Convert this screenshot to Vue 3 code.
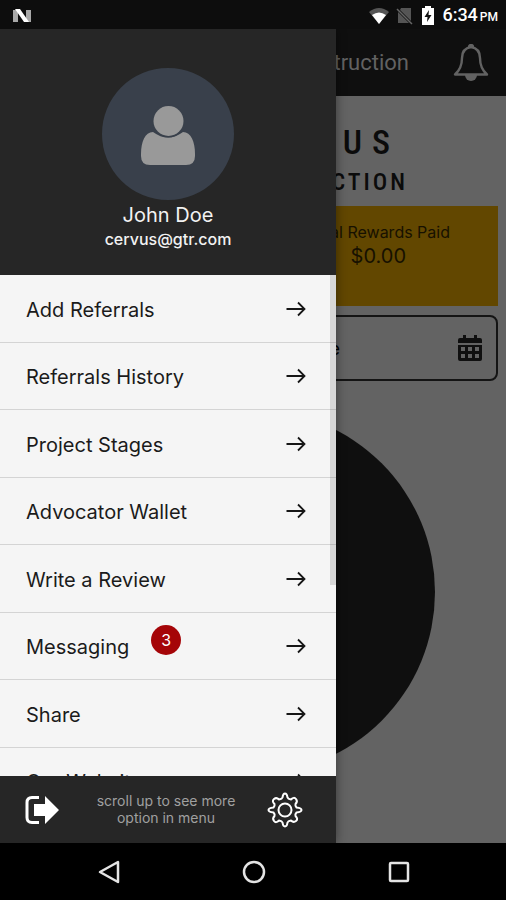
<script setup>
const items = [
  { label: 'Add Referrals' },
  { label: 'Referrals History' },
  { label: 'Project Stages' },
  { label: 'Advocator Wallet' },
  { label: 'Write a Review' },
  { label: 'Messaging', count: 3 },
  { label: 'Share' },
  { label: 'Our Website' },
]
</script>

<template>
  <div class="phone">
    <div class="status">
      <svg class="brand" width="20" height="16" viewBox="0 0 20 16">
        <path d="M1 2h5v12H1zM14 2h5v12h-5z" fill="#a8a8a8" />
        <path d="M3 1h5l9 13h-5z" fill="#fff" />
      </svg>
      <div class="status-right">
        <svg width="20" height="16" viewBox="0 0 20 16">
          <path d="M0 4Q10-4 20 4L10 16z" fill="#555" />
          <path d="M3 7Q10 2 17 7L10 16z" fill="#fff" />
        </svg>
        <svg width="18" height="18" viewBox="0 0 18 18">
          <path d="M5 1h10v13L4 3z" fill="#555" />
          <path d="M2 5v11h11z" fill="#555" />
          <path d="M1 2l15 15" stroke="#666" stroke-width="1.5" />
        </svg>
        <svg width="14" height="20" viewBox="0 0 14 20">
          <path d="M4 0h6v2h3v17H1V2h3z" fill="#fff" />
          <path d="M8 4L3.500 11H6.500L6 16 10.500 9H7.500z" fill="#111" />
        </svg>
        <span class="clock">6:34<small>PM</small></span>
      </div>
    </div>

    <div class="stage">
      <main class="home">
        <header class="appbar">
          <h1>Cervus Construction</h1>
          <button class="icon-btn" aria-label="Notifications">
            <svg width="36" height="38" viewBox="0 0 36 38" fill="none" stroke="#626262" stroke-width="2.400">
              <path d="M18 3c-6 1-9 5-9 11 0 9-3 13-7 16.500h32C30 27 27 23 27 14c0-6-3-10-9-11z" stroke-linejoin="round" />
              <path d="M16 3a2 2 0 0 1 4 0" />
              <path d="M12 31h12a6 6 0 0 1-12 0z" fill="#626262" stroke="none" />
            </svg>
          </button>
        </header>
        <div class="logo">
          <div class="logo-top">CERVUS</div>
          <div class="logo-sub">CONSTRUCTION</div>
        </div>
        <section class="reward">
          <div class="reward-label">Total Rewards Paid</div>
          <div class="reward-value">$0.00</div>
        </section>
        <button class="date">
          <span>Select Date Range</span>
          <svg width="24" height="26" viewBox="0 0 24 26">
            <path d="M5 0h3v3h8V0h3v3h3q2 0 2 2v3H0V5q0-2 2-2h3z" fill="#101010" />
            <path fill-rule="evenodd" d="M0 10h24v14q0 2-2 2H2q-2 0-2-2zM3 12v4h4v-4zM10 12v4h4v-4zM17 12v4h4v-4zM3 19v4h4v-4zM10 19v4h4v-4zM17 19v4h4v-4z" fill="#101010" />
          </svg>
        </button>
        <div class="chart"></div>
      </main>

      <aside class="drawer">
        <div class="profile">
          <svg class="avatar" width="132" height="132" viewBox="0 0 132 132">
            <circle cx="66" cy="66" r="66" fill="#39404b" />
            <path d="M51 64C43 64 39 74 39 86v2q0 9 9 9h36q9 0 9-9v-2C93 74 89 64 81 64Q66 75 51 64z" fill="#999" />
            <circle cx="66.500" cy="53" r="16.500" fill="#39404b" />
            <circle cx="66.500" cy="53" r="15" fill="#999" />
          </svg>
          <div class="name">John Doe</div>
          <div class="mail">cervus@gtr.com</div>
        </div>
        <nav class="menu">
          <div class="list">
            <a v-for="item in items" :key="item.label" href="#" class="row">
              <span class="label">{{ item.label }}</span>
              <span v-if="item.count" class="badge">{{ item.count }}</span>
              <svg class="arrow" width="20" height="16" viewBox="0 0 20 16" fill="none" stroke="#161616" stroke-width="1.800">
                <path d="M0.500 8H18M12 1.500L18.500 8 12 14.500" />
              </svg>
            </a>
          </div>
          <div class="thumb"></div>
        </nav>
        <footer class="foot">
          <button class="icon-btn" aria-label="Log out">
            <svg width="36" height="30" viewBox="0 0 36 30">
              <path d="M15 2.500H8q-5 0-5 5v15q0 5 5 5h7" fill="none" stroke="#fff" stroke-width="3" />
              <path d="M10 9h11V1l14 14-14 14v-8H10z" fill="#fff" />
            </svg>
          </button>
          <p>scroll up to see more option in menu</p>
          <button class="icon-btn" aria-label="Settings">
            <svg width="36" height="36" viewBox="0 0 36 36" fill="none" stroke="#fff" stroke-width="2" stroke-linejoin="round">
              <path d="M15.500 5.500Q16 1.500 18 1.500T20.500 5.500Q21 7 24 7.500Q27 4.500 29 7T28.500 12Q28 14 29.500 15.500Q34.500 16 34.500 18T29.500 20.500Q28 22 28.500 24Q31.500 27 29 29T24 28.500Q21 29 20.500 30.500Q20 34.500 18 34.500T15.500 30.500Q15 29 12 28.500Q9 31.500 7 29T7.500 24Q8 22 6.500 20.500Q1.500 20 1.500 18T6.500 15.500Q8 14 7.500 12Q4.500 9 7 7T12 7.500Q15 7 15.500 5.500z" />
              <circle cx="18" cy="18" r="6.500" />
            </svg>
          </button>
        </footer>
      </aside>
    </div>

    <div class="sysnav">
      <button class="icon-btn" aria-label="Back">
        <svg width="24" height="24" viewBox="0 0 24 24" fill="none" stroke="#e4e4e4" stroke-width="2.500" stroke-linejoin="round"><path d="M21 2v20L3 12z" /></svg>
      </button>
      <button class="icon-btn" aria-label="Home">
        <svg width="24" height="24" viewBox="0 0 24 24" fill="none" stroke="#e4e4e4" stroke-width="2.500"><circle cx="12" cy="12" r="10" /></svg>
      </button>
      <button class="icon-btn" aria-label="Recent apps">
        <svg width="24" height="24" viewBox="0 0 24 24" fill="none" stroke="#e4e4e4" stroke-width="2.500"><rect x="3" y="3" width="18" height="18" rx="1" /></svg>
      </button>
    </div>
  </div>
</template>

<style>
body {
  margin: 0;
  background: #000;
}
</style>

<style scoped>
* {
  box-sizing: border-box;
}
.phone {
  display: flex;
  flex-direction: column;
  height: 100vh;
  font-family: Inter, Roboto, sans-serif;
}
button {
  font: inherit;
  color: inherit;
  cursor: pointer;
}
.icon-btn {
  display: flex;
  padding: 0;
  border: 0;
  background: none;
}
.status {
  display: flex;
  align-items: center;
  justify-content: space-between;
  height: 29px;
  padding: 2px 8px 0 12px;
  background: #0d0d0d;
}
.status-right {
  display: flex;
  align-items: center;
  gap: 7px;
}
.clock {
  display: flex;
  align-items: baseline;
  gap: 2px;
  color: #fff;
  font: 500 18px/20px Roboto, sans-serif;
}
.clock small {
  font-size: 12px;
}
.stage {
  position: relative;
  flex: 1;
  min-height: 0;
  overflow: hidden;
}
.home {
  display: flex;
  flex-direction: column;
  height: 100%;
  background: #636363;
}
.appbar {
  display: flex;
  align-items: center;
  justify-content: flex-end;
  gap: 44px;
  flex: none;
  height: 67px;
  padding: 0 17px;
  background: #0f0f0f;
}
.appbar h1 {
  margin: 0;
  color: #626262;
  font: 400 22px/28px Roboto, sans-serif;
}
.logo {
  flex: none;
  height: 110px;
  padding: 24px 98px 0 0;
  color: #0b0b0b;
  text-align: right;
  font-family: "Roboto Condensed", Roboto, sans-serif;
}
.logo-top {
  padding-right: 8px;
  font-size: 34px;
  line-height: 44px;
  font-weight: 500;
  letter-spacing: 10px;
}
.logo-sub {
  font-size: 24px;
  line-height: 36px;
  font-weight: 500;
  letter-spacing: 3px;
}
.reward {
  flex: none;
  height: 100px;
  margin: 0 8px;
  padding: 14px 48px 0;
  background: #624700;
  color: #171100;
  text-align: right;
}
.reward-label {
  font-size: 16px;
  line-height: 24px;
}
.reward-value {
  padding-right: 44px;
  font-size: 20px;
  line-height: 24px;
}
.date {
  display: flex;
  align-items: center;
  justify-content: space-between;
  flex: none;
  height: 66px;
  margin: 9px 8px 0;
  padding: 0 14px;
  border: 2px solid #141414;
  border-radius: 8px;
  background: none;
}
.date span {
  width: 316px;
  text-align: right;
  font-size: 18px;
}
.chart {
  flex: none;
  width: 364px;
  height: 364px;
  margin: 29px auto 0;
  border-radius: 50%;
  background: #0f0f0f;
}
.drawer {
  position: absolute;
  inset: 0 auto 0 0;
  display: flex;
  flex-direction: column;
  width: 336px;
  max-width: 90%;
  background: #262626;
  box-shadow: 0 0 10px rgba(0, 0, 0, 0.45);
}
.profile {
  display: flex;
  flex-direction: column;
  align-items: center;
  flex: none;
  height: 246px;
  padding-top: 39px;
  color: #f2f2f2;
}
.name {
  margin-top: 3px;
  font-size: 20px;
  line-height: 24px;
}
.mail {
  font-size: 16px;
  line-height: 24px;
  font-weight: 500;
}
.menu {
  position: relative;
  flex: 1;
  min-height: 0;
  overflow: hidden;
  background: #f5f5f5;
}
.list {
  display: grid;
  grid-auto-rows: 1fr;
  height: 540px;
}
.row {
  display: flex;
  align-items: center;
  padding: 0 30px 0 26px;
  box-shadow: inset 0 -1px #d4d4d4;
  color: #1b1b1b;
  font-size: 20px;
  text-decoration: none;
}
.label {
  padding-top: 2px;
}
.badge {
  width: 30px;
  height: 30px;
  margin: 0 0 12px 22px;
  border-radius: 50%;
  background: #a50508;
  color: #fff;
  font-size: 16px;
  line-height: 30px;
  text-align: center;
}
.arrow {
  margin-left: auto;
}
.thumb {
  position: absolute;
  top: 0;
  right: 0;
  width: 6px;
  height: 310px;
  background: rgba(0, 0, 0, 0.12);
}
.foot {
  display: flex;
  align-items: center;
  justify-content: space-between;
  flex: none;
  height: 67px;
  padding: 0 33px 0 24px;
}
.foot p {
  width: 160px;
  margin: 0 0 2px 5px;
  color: #a0a0a0;
  font-size: 14px;
  line-height: 17px;
  text-align: center;
}
.sysnav {
  display: flex;
  align-items: center;
  justify-content: center;
  gap: 121px;
  flex: none;
  height: 57px;
  padding-left: 2px;
  background: #000;
}
</style>
